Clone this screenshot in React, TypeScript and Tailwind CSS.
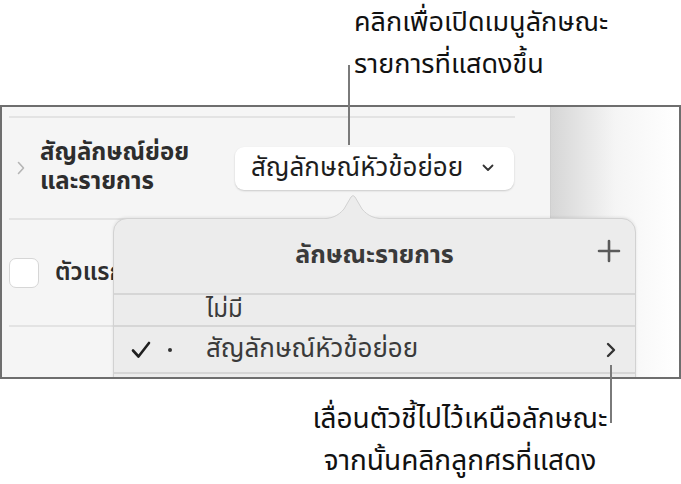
import React from 'react'

const font = { fontFamily: '"Noto Sans Thai", "Noto Sans", "DejaVu Sans", sans-serif' }

const App: React.FC = () => {
    return (
        <div className="relative h-[484px] w-[681px] overflow-hidden bg-white text-black" style={font}>
            {/* top callout */}
            <div className="pl-[354px] pt-[2px] text-[27px] leading-[42px] text-[#111]">
                <p>คลิกเพื่อเปิดเมนูลักษณะ</p>
                <p>รายการที่แสดงขึ้น</p>
            </div>

            {/* screenshot frame */}
            <div className="relative mt-[19px] flex h-[274px] w-[681px] overflow-hidden border-2 border-[#6e6e6e]">
                <div className="flex w-[548px] flex-col bg-[#f5f5f5] pt-[9px]">
                    <div className="mx-[7px] h-[2px] w-[506px] bg-[#e3e3e3]"></div>

                    <div className="flex h-[100px] items-center">
                        <div className="flex w-[38px] justify-center">
                            <svg width="8" height="14" viewBox="0 0 8 14">
                                <path d="M1.5 1.5 L6.5 7 L1.5 12.5" fill="none" stroke="#b5b5b5" strokeWidth="1.6" strokeLinecap="round" strokeLinejoin="round" />
                            </svg>
                        </div>
                        <div className="w-[195px] text-[24px] font-bold leading-[29px] text-[#2d2d2d]">
                            <p>สัญลักษณ์ย่อย</p>
                            <p>และรายการ</p>
                        </div>
                        <div className="flex h-[43px] w-[279px] items-center justify-between rounded-[9px] bg-white pl-[16px] pr-[20px] text-[26px] text-[#1d1d1d] shadow-[0_1px_2px_rgba(0,0,0,0.18)]">
                            <span>สัญลักษณ์หัวข้อย่อย</span>
                            <svg width="12" height="8" viewBox="0 0 12 8">
                                <path d="M1.5 1.5 L6 6 L10.5 1.5" fill="none" stroke="#333" strokeWidth="1.8" strokeLinecap="round" strokeLinejoin="round" />
                            </svg>
                        </div>
                    </div>

                    <div className="mx-[7px] h-[2px] w-[506px] bg-[#e3e3e3]"></div>

                    <div className="flex h-[105px] items-center pl-[7px]">
                        <div className="h-[30px] w-[30px] rounded-[7px] border border-[#d6d6d6] bg-white"></div>
                        <span className="ml-[16px] text-[24px] font-semibold text-[#2d2d2d]">ตัวแรก</span>
                    </div>

                    <div className="mx-[7px] h-[2px] w-[506px] bg-[#e3e3e3]"></div>
                </div>
                <div className="flex-1 border-l border-[#cfcfcf] bg-gradient-to-r from-[#d6d6d6] via-[#f5f5f5] to-white"></div>

                {/* popover */}
                <div className="absolute left-[111px] top-[111px] w-[523px]">
                    <svg className="absolute left-[205px] top-[-24px]" width="70" height="26" viewBox="0 0 70 26">
                        <path d="M0 25 C14 25 20 22 26 15 L33 3 Q35 0 37 3 L44 15 C50 22 56 25 70 25" fill="#ececec" stroke="#d2d2d2" strokeWidth="1" />
                        <rect x="0" y="25" width="70" height="1" fill="#ececec" />
                    </svg>
                    <div className="flex h-[180px] flex-col rounded-t-[14px] border border-[#d2d2d2] bg-[#ececec] shadow-[0_-1px_3px_rgba(0,0,0,0.08)]">
                        <div className="relative flex h-[74px] items-center justify-center">
                            <span className="text-[25px] font-bold text-[#3a3a3a]">ลักษณะรายการ</span>
                            <svg className="absolute right-[14px] top-[20px]" width="24" height="24" viewBox="0 0 24 24">
                                <path d="M12 2 V22 M2 12 H22" stroke="#5a5a5a" strokeWidth="2.6" strokeLinecap="round" />
                            </svg>
                        </div>
                        <div className="h-[2px] bg-[#d6d6d6]"></div>
                        <div className="flex h-[30px] items-center pl-[92px] text-[24px] text-[#3a3a3a]">ไม่มี</div>
                        <div className="h-[2px] bg-[#d6d6d6]"></div>
                        <div className="flex h-[45px] items-center text-[26px] text-[#3a3a3a]">
                            <svg className="ml-[17px]" width="20" height="18" viewBox="0 0 20 18">
                                <path d="M2 9.5 L7.5 15.5 L18 2" fill="none" stroke="#1f1f1f" strokeWidth="2.6" strokeLinecap="round" strokeLinejoin="round" />
                            </svg>
                            <span className="ml-[17px] h-[4px] w-[4px] rounded-full bg-[#333]"></span>
                            <span className="ml-[34px] flex-1">สัญลักษณ์หัวข้อย่อย</span>
                            <svg className="mr-[19px]" width="10" height="16" viewBox="0 0 10 16">
                                <path d="M2 2 L8 8 L2 14" fill="none" stroke="#333" strokeWidth="2.4" strokeLinecap="round" strokeLinejoin="round" />
                            </svg>
                        </div>
                        <div className="h-[2px] bg-[#d6d6d6]"></div>
                    </div>
                </div>
            </div>

            {/* bottom callout */}
            <div className="ml-[160px] w-[600px] pt-[20px] text-center text-[28px] leading-[42px] text-[#111]">
                <p>เลื่อนตัวชี้ไปไว้เหนือลักษณะ</p>
                <p>จากนั้นคลิกลูกศรที่แสดง</p>
            </div>

            {/* callout lines */}
            <div className="absolute left-[348px] top-[65px] h-[80px] w-[2px] bg-[#7a7a7a]"></div>
            <div className="absolute left-[610px] top-[365px] h-[58px] w-[2px] bg-[#7a7a7a]"></div>
        </div>
    )
}

export default App
